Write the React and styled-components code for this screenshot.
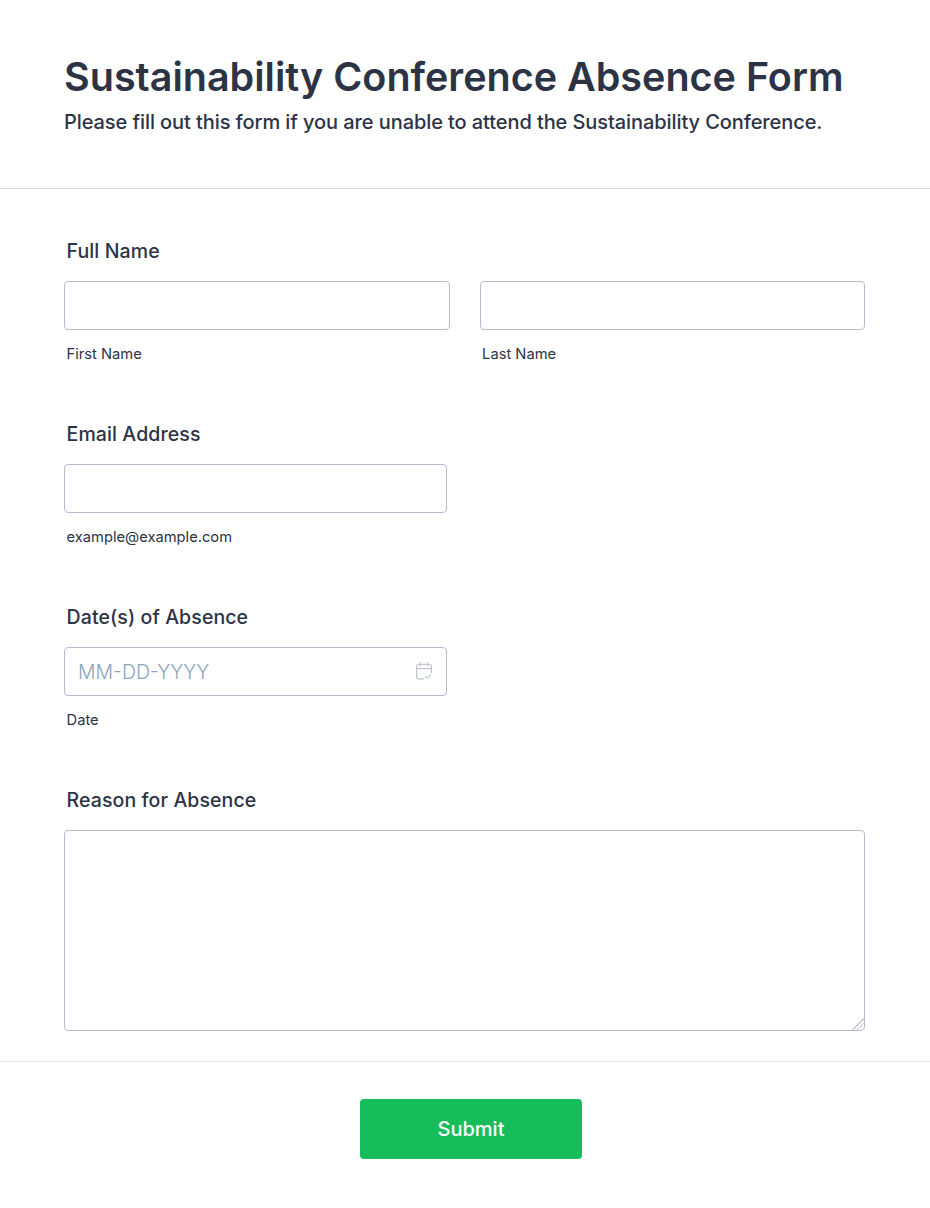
import React from 'react';
import styled, { createGlobalStyle } from 'styled-components';

const GlobalStyle = createGlobalStyle`
  html, body {
    margin: 0;
    padding: 0;
    background: #fff;
  }
  * {
    box-sizing: border-box;
  }
`;

const Page = styled.div`
  width: 930px;
  height: 1208px;
  font-family: Inter, 'Liberation Sans', sans-serif;
  color: #2c3345;
  background: #fff;
  overflow: hidden;
`;

const Header = styled.header`
  height: 189px;
  padding: 53px 64px 0;
  border-bottom: 1px solid #d8dae9;
`;

const Title = styled.h1`
  margin: 0;
  font-size: 39.5px;
  line-height: 48px;
  font-weight: 600;
`;

const Subtitle = styled.p`
  margin: 7px 0 0;
  font-size: 20px;
  line-height: 28px;
  font-weight: 450;
  letter-spacing: -0.085px;
`;

const Fields = styled.div`
  padding: 49px 65px 0 64px;
  display: flex;
  flex-direction: column;
  gap: 57px;
`;

const Field = styled.div`
  display: flex;
  flex-direction: column;
`;

const Label = styled.label`
  margin: 0 0 17px 2.6px;
  font-size: 19.5px;
  line-height: 26px;
  font-weight: 450;
  letter-spacing: 0.1px;
`;

const Row = styled.div`
  display: flex;
  gap: 30px;
`;

const Col = styled.div`
  flex: 1;
  display: flex;
  flex-direction: column;
`;

const Narrow = styled.div`
  width: 383px;
  display: flex;
  flex-direction: column;
`;

const Input = styled.input`
  width: 100%;
  height: 49px;
  padding: 0 13px;
  border: 1px solid #b8bbd0;
  border-radius: 4px;
  background: #fff;
  font-family: inherit;
  font-size: 19.5px;
  color: #2c3345;
  outline: none;
  &::placeholder {
    color: #8ca4c0;
    opacity: 1;
    font-weight: 300;
  }
`;

const InputWrap = styled.div`
  position: relative;
`;

const IconSlot = styled.span`
  position: absolute;
  right: 15px;
  top: 15px;
  width: 16px;
  height: 18px;
  display: block;
`;

const Hint = styled.span`
  margin: 14px 0 0 2.6px;
  font-size: 14.7px;
  line-height: 20px;
`;

const TextArea = styled.textarea`
  display: block;
  width: 100%;
  height: 201px;
  padding: 10px 13px;
  border: 1px solid #b8bbd0;
  border-radius: 4px;
  background: #fff;
  font-family: inherit;
  font-size: 16px;
  color: #2c3345;
  outline: none;
  resize: vertical;
  &::-webkit-resizer {
    background: linear-gradient(
      135deg,
      transparent 0 58%,
      #c8cad6 58% 64%,
      transparent 64% 74%,
      #c8cad6 74% 80%,
      transparent 80%
    );
  }
`;

const Footer = styled.footer`
  margin-top: 30px;
  padding: 37px 0 0 360px;
  border-top: 1px solid #e6e6ec;
`;

const SubmitButton = styled.button`
  display: block;
  width: 222px;
  height: 60px;
  border: none;
  border-radius: 4px;
  background: #18bd5b;
  color: #fff;
  font-family: inherit;
  font-size: 20px;
  font-weight: 500;
  cursor: pointer;
`;

const CalendarIcon = () => (
  <svg width="16" height="18" viewBox="0 0 16 18" fill="none" stroke="#c3c7d3" strokeWidth="1.2" strokeLinecap="round" strokeLinejoin="round">
    <path d="M7.5 16.9H2.4A1.8 1.8 0 0 1 .6 15.1V4.2A1.8 1.8 0 0 1 2.4 2.4H13.6A1.8 1.8 0 0 1 15.4 4.2V10.5" />
    <path d="M.6 6.6H15.4" />
    <path d="M4.3 .7V3.9M11.7 .7V3.9" />
    <path d="M9.6 14.4L11.2 16L14.6 12.6" />
  </svg>
);

const App = () => {
  return (
    <Page>
      <GlobalStyle />
      <Header>
        <Title>Sustainability Conference Absence Form</Title>
        <Subtitle>Please fill out this form if you are unable to attend the Sustainability Conference.</Subtitle>
      </Header>

      <Fields>
        <Field>
          <Label>Full Name</Label>
          <Row>
            <Col>
              <Input type="text" />
              <Hint>First Name</Hint>
            </Col>
            <Col>
              <Input type="text" />
              <Hint>Last Name</Hint>
            </Col>
          </Row>
        </Field>

        <Field>
          <Label>Email Address</Label>
          <Narrow>
            <Input type="email" />
            <Hint>example@example.com</Hint>
          </Narrow>
        </Field>

        <Field>
          <Label>Date(s) of Absence</Label>
          <Narrow>
            <InputWrap>
              <Input type="text" placeholder="MM-DD-YYYY" />
              <IconSlot>
                <CalendarIcon />
              </IconSlot>
            </InputWrap>
            <Hint>Date</Hint>
          </Narrow>
        </Field>

        <Field>
          <Label>Reason for Absence</Label>
          <TextArea />
        </Field>
      </Fields>

      <Footer>
        <SubmitButton type="button">Submit</SubmitButton>
      </Footer>
    </Page>
  );
};

export default App;
